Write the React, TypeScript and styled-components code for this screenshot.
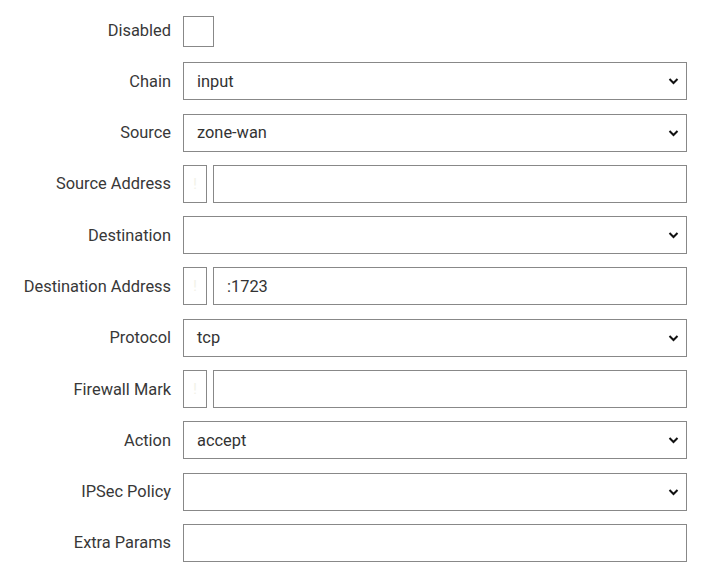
import React from "react";
import styled, { createGlobalStyle } from "styled-components";

const Global = createGlobalStyle`
  html, body { margin: 0; padding: 0; background: #fff; }
  body { font-family: Roboto, "Liberation Sans", sans-serif; color: #333; }
`;

const Form = styled.div`
  display: grid;
  grid-template-columns: 171px 504px;
  column-gap: 12px;
  row-gap: 13.3px;
  padding-top: 11px;
  width: 687px;
`;

const Label = styled.div`
  display: flex;
  align-items: center;
  justify-content: flex-end;
  height: 38px;
  font-size: 16.4px;
  color: #383838;
  white-space: nowrap;
`;

const Cell = styled.div`
  display: flex;
  align-items: center;
  height: 38px;
  gap: 6px;
`;

const Check = styled.div`
  width: 29px;
  height: 29px;
  border: 1px solid #888;
  box-sizing: content-box;
  margin-top: 2px;
`;

const SelectWrap = styled.div`
  position: relative;
  flex: 1;
  height: 38px;
`;

const Select = styled.div`
  box-sizing: border-box;
  height: 38px;
  width: 100%;
  border: 1px solid #888;
  padding: 0 13px;
  display: flex;
  align-items: center;
  font-size: 16.4px;
  color: #333;
`;

const Chevron = styled.svg`
  position: absolute;
  right: 8px;
  top: 15px;
`;

const Small = styled.div`
  box-sizing: border-box;
  width: 24px;
  height: 38px;
  border: 1px solid #888;
  display: flex;
  align-items: center;
  justify-content: center;
  color: #f2f2e8;
  font-size: 14px;
`;

const TextBox = styled.div`
  box-sizing: border-box;
  flex: 1;
  height: 38px;
  border: 1px solid #888;
  padding: 0 13px;
  display: flex;
  align-items: center;
  font-size: 16.4px;
  color: #333;
`;

const Drop = ({ value }: { value: string }) => (
  <SelectWrap>
    <Select>{value}</Select>
    <Chevron width="11" height="8" viewBox="0 0 11 8">
      <path d="M1.5 2 L5.5 6 L9.5 2" fill="none" stroke="#111" strokeWidth="2" />
    </Chevron>
  </SelectWrap>
);

const Pair = ({ value }: { value: string }) => (
  <Cell>
    <Small>!</Small>
    <TextBox>{value}</TextBox>
  </Cell>
);

export default function App() {
  return (
    <>
      <Global />
      <Form>
        <Label>Disabled</Label>
        <Cell>
          <Check />
        </Cell>
        <Label>Chain</Label>
        <Cell><Drop value="input" /></Cell>
        <Label>Source</Label>
        <Cell><Drop value="zone-wan" /></Cell>
        <Label>Source Address</Label>
        <Pair value="" />
        <Label>Destination</Label>
        <Cell><Drop value="" /></Cell>
        <Label>Destination Address</Label>
        <Pair value=":1723" />
        <Label>Protocol</Label>
        <Cell><Drop value="tcp" /></Cell>
        <Label>Firewall Mark</Label>
        <Pair value="" />
        <Label>Action</Label>
        <Cell><Drop value="accept" /></Cell>
        <Label>IPSec Policy</Label>
        <Cell><Drop value="" /></Cell>
        <Label>Extra Params</Label>
        <Cell><TextBox /></Cell>
      </Form>
    </>
  );
}
